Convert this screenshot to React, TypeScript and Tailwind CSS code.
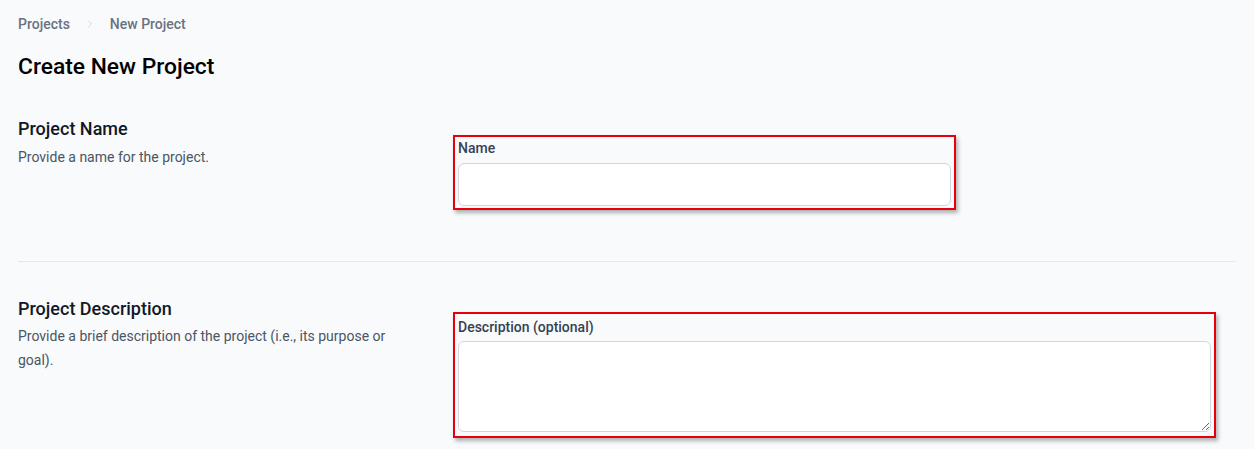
import { ChevronRight } from "lucide-react";

export default function App() {
  return (
    <div className="min-h-[449px] w-full bg-gray-50 font-['Roboto',sans-serif] px-[18px]">
      {/* Breadcrumb */}
      <nav className="flex items-center h-[48px] text-sm font-medium text-gray-500">
        <span>Projects</span>
        <ChevronRight className="mx-[14px] h-3 w-3 text-gray-300" strokeWidth={2} />
        <span>New Project</span>
      </nav>

      <h1 className="mt-[1px] text-[22.8px] font-medium text-black leading-[36px]">Create New Project</h1>

      {/* Project name */}
      <section className="flex mt-[31px] pb-[51px] border-b border-gray-200">
        <div className="w-[435px] shrink-0 pr-[50px]">
          <h2 className="text-lg font-medium text-gray-900 leading-[26px]">Project Name</h2>
          <p className="text-sm text-gray-600 leading-6 mt-[3px]">Provide a name for the project.</p>
        </div>
        <div className="w-[503px] mt-[19px] border-2 border-red-600 shadow-[2px_3px_4px_rgba(0,0,0,0.3)] px-[3px] pt-[1px] pb-[2px]">
          <label className="block text-sm font-medium text-gray-700 leading-[20px]">Name</label>
          <input className="mt-[5px] block h-[43px] w-full rounded-md border border-gray-300 bg-white" />
        </div>
      </section>

      {/* Project description */}
      <section className="flex pt-[34px]">
        <div className="w-[435px] shrink-0 pr-[50px]">
          <h2 className="text-lg font-medium text-gray-900 leading-[26px]">Project Description</h2>
          <p className="text-sm text-gray-600 leading-6 mt-[2px]">
            Provide a brief description of the project (i.e., its purpose or goal).
          </p>
        </div>
        <div className="w-[763px] mt-[16px] border-2 border-red-600 shadow-[2px_3px_4px_rgba(0,0,0,0.3)] px-[3px] pt-[3px] pb-[4px]">
          <label className="block text-sm font-medium text-gray-700 leading-[20px]">Description (optional)</label>
          <textarea className="mt-[4px] block h-[91px] w-full rounded-md border border-gray-300 bg-white" />
        </div>
      </section>
    </div>
  );
}
